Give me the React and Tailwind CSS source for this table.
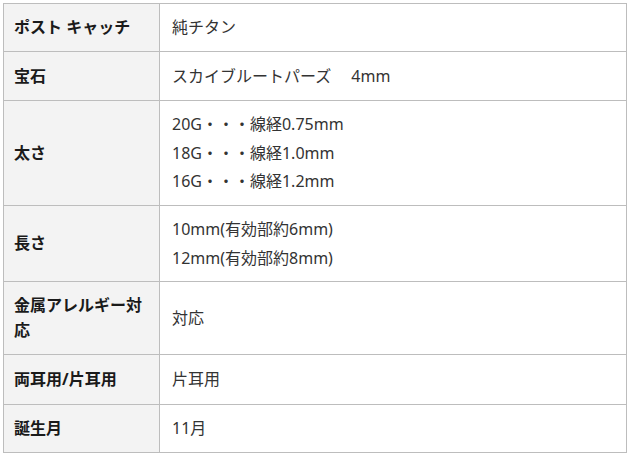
import React from "react";

// Spec rows for the product table
const rows = [
  { label: "ポスト キャッチ", value: ["純チタン"], h: "h-[48px]" },
  { label: "宝石", value: ["スカイブルートパーズ\u3000 4mm"], h: "h-[49px]" },
  {
    label: "太さ",
    value: ["20G・・・線経0.75mm", "18G・・・線経1.0mm", "16G・・・線経1.2mm"],
    h: "h-[105px]",
  },
  { label: "長さ", value: ["10mm(有効部約6mm)", "12mm(有効部約8mm)"], h: "h-[76px]" },
  { label: "金属アレルギー対応", value: ["対応"], h: "h-[73px]" },
  { label: "両耳用/片耳用", value: ["片耳用"], h: "h-[50px]" },
  { label: "誕生月", value: ["11月"], h: "h-[48px]" },
];

const App = () => {
  return (
    <div
      className="min-h-screen bg-white pt-[3px] pl-[3px]"
      style={{ fontFamily: '"Noto Sans", "Noto Sans CJK JP", sans-serif' }}
    >
      <div className="w-[624px] border-t border-l border-r border-[#bdbdbd]">
        {rows.map((row) => (
          <div key={row.label} className={`flex border-b border-[#bdbdbd] ${row.h}`}>
            {/* Header cell */}
            <div className="w-[156px] flex-shrink-0 flex items-center bg-[#f3f3f3] border-r border-[#bdbdbd] pl-[10px] pr-2">
              <span className="text-[16px] leading-[25px] font-bold text-[#1a1a1a]">{row.label}</span>
            </div>
            {/* Value cell */}
            <div className="flex-1 flex flex-col justify-center pl-[12px] text-[16px] leading-[28.5px] text-[#333]">
              {row.value.map((v) => (
                <div key={v} className="whitespace-pre">{v}</div>
              ))}
            </div>
          </div>
        ))}
      </div>
    </div>
  );
};

export default App;
